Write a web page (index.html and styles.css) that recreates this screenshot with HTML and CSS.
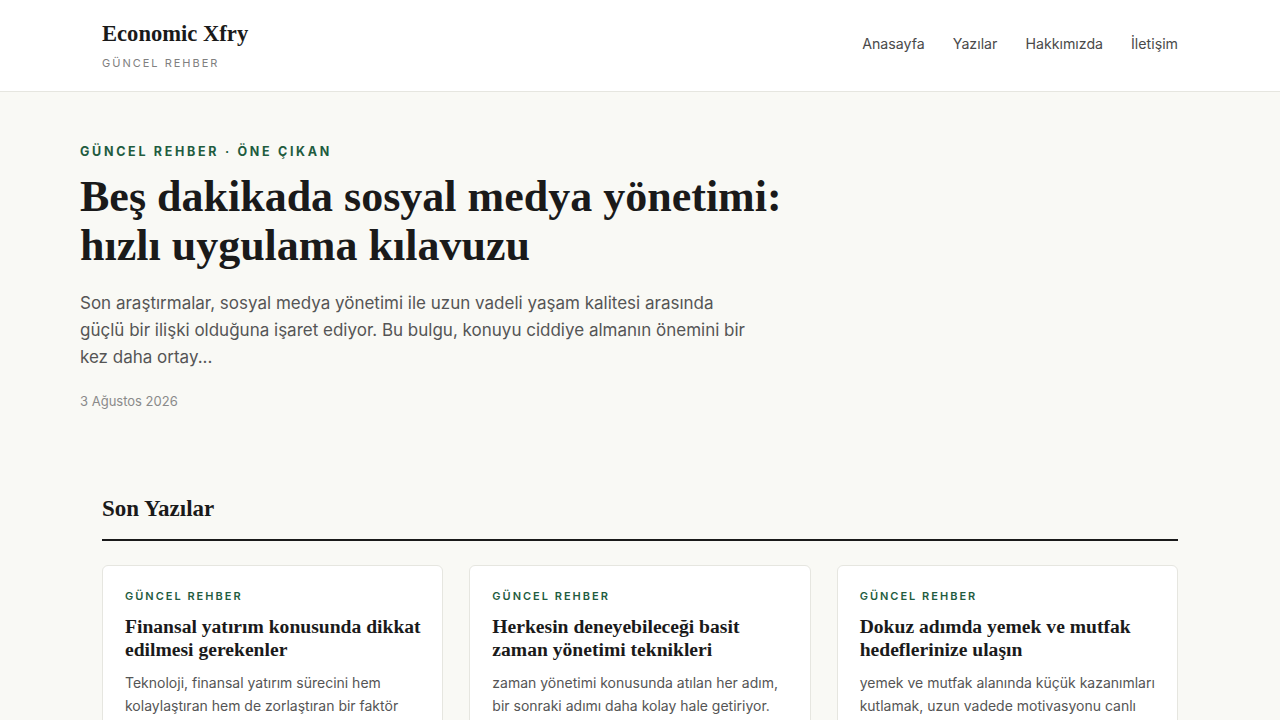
FILE: index.html
```html
<!DOCTYPE html>
<html lang="tr">
<head>
<meta charset="utf-8">
<title>Economic Xfry</title>
<link rel="stylesheet" href="styles.css">
</head>
<body>
<header class="site-header">
  <div class="header-inner">
    <div class="brand">
      <div class="brand-name">Economic Xfry</div>
      <div class="brand-tag">GÜNCEL REHBER</div>
    </div>
    <nav class="nav">
      <a href="#">Anasayfa</a>
      <a href="#">Yazılar</a>
      <a href="#">Hakkımızda</a>
      <a href="#">İletişim</a>
    </nav>
  </div>
</header>
<main>
  <section class="hero">
    <div class="eyebrow">GÜNCEL REHBER · ÖNE ÇIKAN</div>
    <h1 class="hero-title">Beş dakikada sosyal medya yönetimi: hızlı uygulama kılavuzu</h1>
    <p class="hero-text">Son araştırmalar, sosyal medya yönetimi ile uzun vadeli yaşam kalitesi arasında güçlü bir ilişki olduğuna işaret ediyor. Bu bulgu, konuyu ciddiye almanın önemini bir kez daha ortay...</p>
    <div class="hero-date">3 Ağustos 2026</div>
  </section>
  <section class="recent">
    <h2 class="section-title">Son Yazılar</h2>
    <div class="cards">
      <article class="card">
        <div class="card-eyebrow">GÜNCEL REHBER</div>
        <h3 class="card-title">Finansal yatırım konusunda dikkat edilmesi gerekenler</h3>
        <p class="card-text">Teknoloji, finansal yatırım sürecini hem kolaylaştıran hem de zorlaştıran bir faktör olarak öne çıkıyor.</p>
      </article>
      <article class="card">
        <div class="card-eyebrow">GÜNCEL REHBER</div>
        <h3 class="card-title">Herkesin deneyebileceği basit zaman yönetimi teknikleri</h3>
        <p class="card-text">zaman yönetimi konusunda atılan her adım, bir sonraki adımı daha kolay hale getiriyor.</p>
      </article>
      <article class="card">
        <div class="card-eyebrow">GÜNCEL REHBER</div>
        <h3 class="card-title">Dokuz adımda yemek ve mutfak hedeflerinize ulaşın</h3>
        <p class="card-text">yemek ve mutfak alanında küçük kazanımları kutlamak, uzun vadede motivasyonu canlı tutmanın en iyi yolu.</p>
      </article>
    </div>
  </section>
</main>
</body>
</html>
```
FILE: styles.css
```css
* { box-sizing: border-box; }
html, body { margin: 0; padding: 0; }
body {
  background: #f9f9f5;
  font-family: Inter, "Noto Sans", sans-serif;
  color: #1a1a1a;
}
.site-header {
  background: #ffffff;
  border-bottom: 1px solid #e6e6e0;
  height: 92px;
}
.header-inner {
  width: 1076px;
  margin: 0 auto;
  height: 100%;
  display: flex;
  align-items: center;
  justify-content: space-between;
}
.brand { display: flex; flex-direction: column; margin-top: -2px; }
.brand-name {
  font-family: "Liberation Serif", serif;
  font-weight: 700;
  font-size: 22.6px;
  line-height: 28px;
  color: #1a1a1a;
}
.brand-tag {
  margin-top: 8px;
  font-size: 11px;
  letter-spacing: 2px;
  color: #808080;
  line-height: 14px;
}
.nav { display: flex; gap: 28px; margin-top: -4px; }
.nav a {
  text-decoration: none;
  color: #4a4a4a;
  font-size: 14.2px;
}
.hero {
  width: 1120px;
  margin: 0 auto;
  padding: 52px 0 0;
}
.eyebrow {
  font-size: 12.5px;
  font-weight: 700;
  letter-spacing: 2.7px;
  color: #1f5c3f;
  line-height: 16px;
}
.hero-title {
  margin: 12px 0 0;
  max-width: 720px;
  font-family: "Liberation Serif", serif;
  font-weight: 700;
  font-size: 44px;
  line-height: 49px;
  color: #1a1a1a;
}
.hero-text {
  margin: 20px 0 0;
  max-width: 680px;
  font-size: 17px;
  line-height: 27px;
  color: #555555;
}
.hero-date {
  margin-top: 22px;
  font-size: 13px;
  color: #8a8a8a;
}
.recent {
  width: 1076px;
  margin: 0 auto;
  padding-top: 86px;
}
.section-title {
  margin: 0;
  font-family: "Liberation Serif", serif;
  font-weight: 700;
  font-size: 23px;
  line-height: 28px;
  padding-bottom: 16px;
  border-bottom: 2px solid #1a1a1a;
}
.cards {
  margin-top: 24px;
  display: grid;
  grid-template-columns: repeat(3, 1fr);
  gap: 26px;
}
.card {
  background: #ffffff;
  border: 1px solid #e6e6e0;
  border-radius: 6px;
  padding: 23px 20px 23px 22px;
}
.card-eyebrow {
  font-size: 11px;
  font-weight: 600;
  letter-spacing: 2px;
  color: #1f5c3f;
  line-height: 14px;
}
.card-title {
  margin: 12px 0 0;
  font-family: "Liberation Serif", serif;
  font-weight: 700;
  font-size: 19.6px;
  line-height: 23px;
  color: #1a1a1a;
}
.card-text {
  margin: 10px 0 0;
  font-size: 14px;
  line-height: 23px;
  color: #555555;
}
```
